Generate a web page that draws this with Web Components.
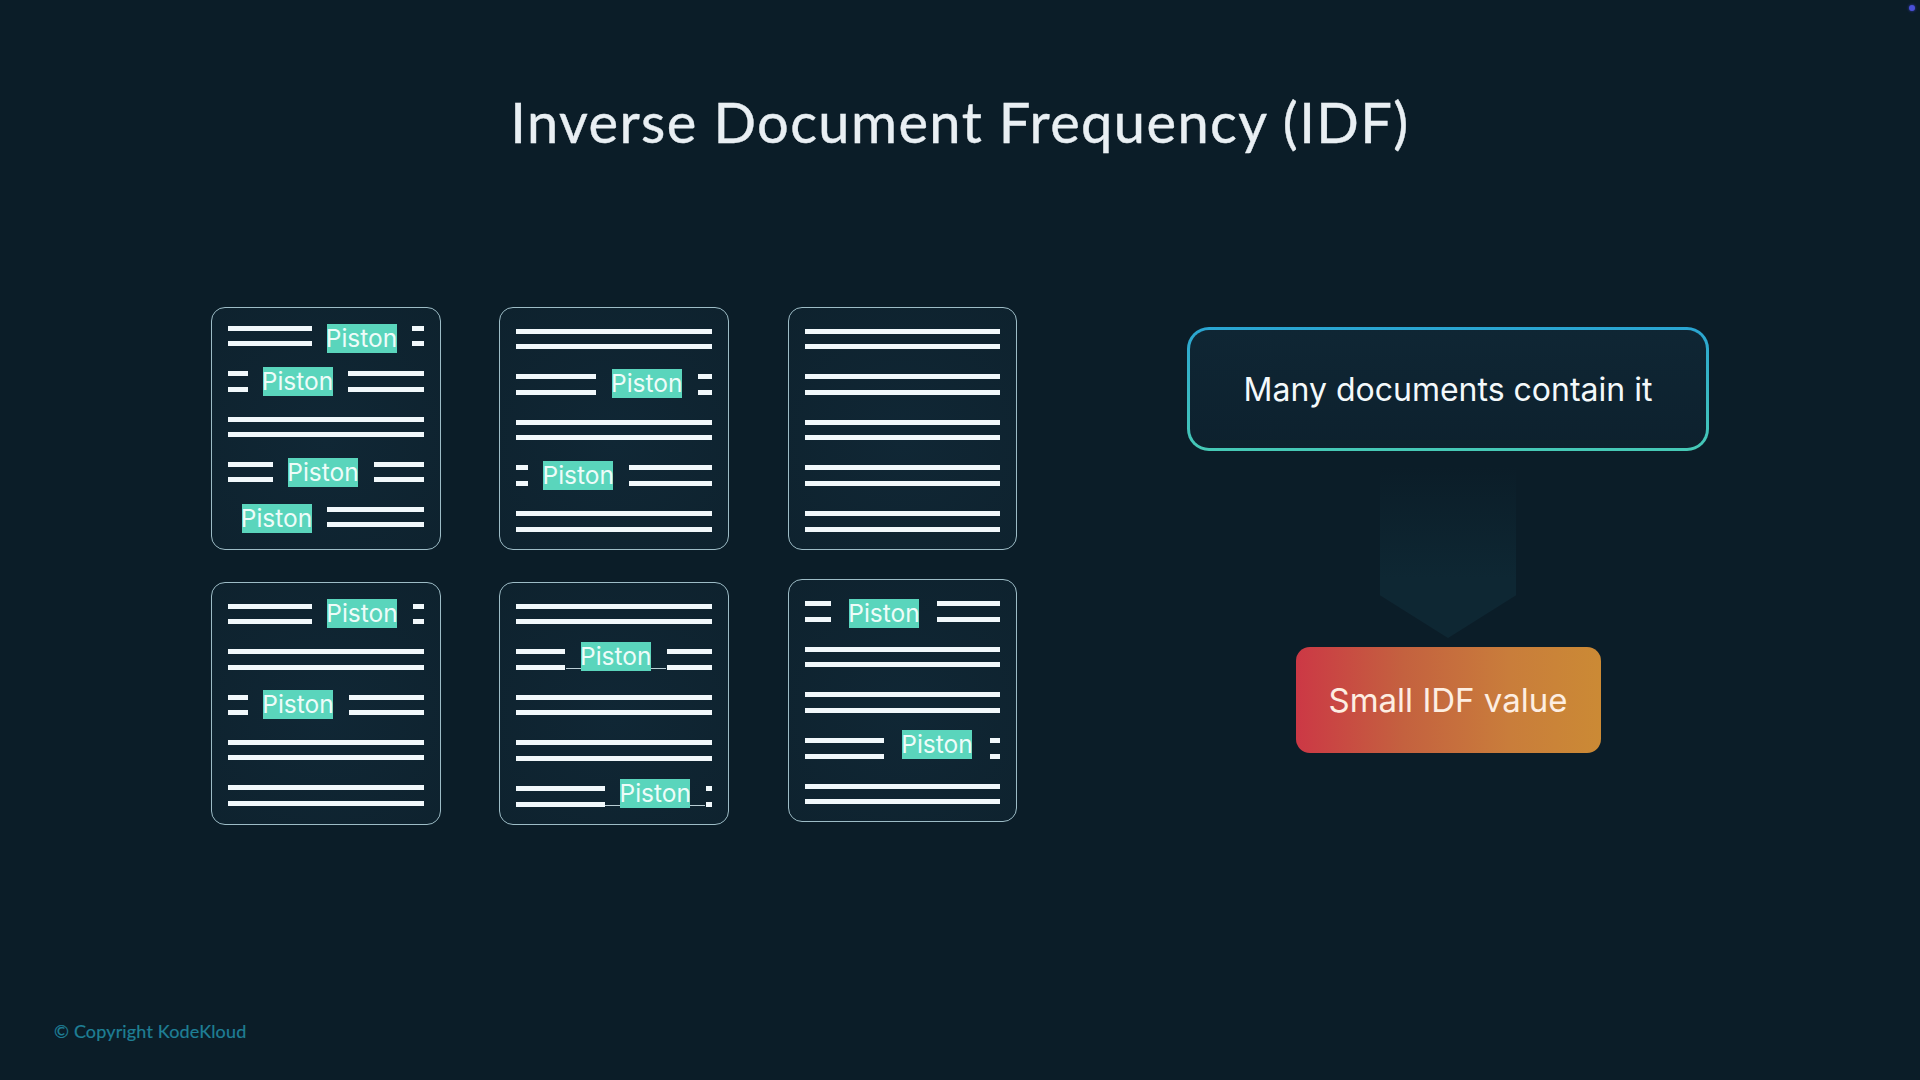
<!DOCTYPE html>
<html lang="en">
<head>
<meta charset="utf-8">
<title>Inverse Document Frequency (IDF)</title>
<style>
  html, body { margin: 0; background: #0b1d28; }
</style>
</head>
<body>
<idf-slide>
  <span slot="title">Inverse Document Frequency (IDF)</span>

  <doc-card slot="docs" style="--pad-top:17.5px">
    <text-row><bar-pair w="84"></bar-pair><term-chip dy="2.5"></term-chip><bar-pair w="12"></bar-pair></text-row>
    <text-row tall><bar-pair w="20"></bar-pair><term-chip dy="0.5"></term-chip><bar-pair w="76"></bar-pair></text-row>
    <text-row><bar-pair></bar-pair></text-row>
    <text-row><bar-pair w="45"></bar-pair><term-chip dy="0.5"></term-chip><bar-pair w="50"></bar-pair></text-row>
    <text-row><term-chip dy="2" style="margin-left:14px"></term-chip><bar-pair w="97"></bar-pair></text-row>
  </doc-card>

  <doc-card slot="docs">
    <text-row><bar-pair></bar-pair></text-row>
    <text-row tall><bar-pair w="80"></bar-pair><term-chip dy="-1"></term-chip><bar-pair w="14"></bar-pair></text-row>
    <text-row><bar-pair></bar-pair></text-row>
    <text-row tall><bar-pair w="12"></bar-pair><term-chip dy="0.5"></term-chip><bar-pair w="83"></bar-pair></text-row>
    <text-row tall><bar-pair></bar-pair></text-row>
  </doc-card>

  <doc-card slot="docs" class="last-col">
    <text-row><bar-pair></bar-pair></text-row>
    <text-row tall><bar-pair></bar-pair></text-row>
    <text-row><bar-pair></bar-pair></text-row>
    <text-row tall><bar-pair></bar-pair></text-row>
    <text-row tall><bar-pair></bar-pair></text-row>
  </doc-card>

  <doc-card slot="docs">
    <text-row><bar-pair w="84"></bar-pair><term-chip></term-chip><bar-pair w="11"></bar-pair></text-row>
    <text-row tall><bar-pair></bar-pair></text-row>
    <text-row><bar-pair w="20"></bar-pair><term-chip></term-chip><bar-pair w="75"></bar-pair></text-row>
    <text-row><bar-pair></bar-pair></text-row>
    <text-row tall><bar-pair></bar-pair></text-row>
  </doc-card>

  <doc-card slot="docs">
    <text-row><bar-pair></bar-pair></text-row>
    <text-row tall><bar-pair w="49"></bar-pair><term-chip dy="-3" underlined></term-chip><bar-pair w="45"></bar-pair></text-row>
    <text-row><bar-pair></bar-pair></text-row>
    <text-row tall><bar-pair></bar-pair></text-row>
    <text-row tall><bar-pair w="89"></bar-pair><term-chip dy="-3" underlined></term-chip><bar-pair w="6"></bar-pair></text-row>
  </doc-card>

  <doc-card slot="docs" class="last-col" style="margin-top:-3px">
    <text-row tall><bar-pair w="26"></bar-pair><term-chip dy="2"></term-chip><bar-pair w="63"></bar-pair></text-row>
    <text-row><bar-pair></bar-pair></text-row>
    <text-row tall><bar-pair></bar-pair></text-row>
    <text-row tall><bar-pair w="79"></bar-pair><term-chip dy="-3.5"></term-chip><bar-pair w="10"></bar-pair></text-row>
    <text-row><bar-pair></bar-pair></text-row>
  </doc-card>

  <idf-explain slot="side">
    <span slot="fact">Many documents contain it</span>
    <span slot="result">Small IDF value</span>
  </idf-explain>

  <span slot="footer">© Copyright KodeKloud</span>
</idf-slide>

<script>
class IdfSlide extends HTMLElement {
  constructor() {
    super();
    this.attachShadow({ mode: 'open' });
    this.shadowRoot.innerHTML = `
      <style>
        :host {
          display: flex;
          flex-direction: column;
          position: relative;
          width: 1920px;
          height: 1080px;
          overflow: hidden;
          background: #0b1d28;
        }
        h1 {
          margin: 87px 0 0;
          height: 70px;
          text-align: center;
          font: 400 56px/70px Lato, "Open Sans", sans-serif;
          letter-spacing: 1.4px;
          -webkit-text-stroke: 0.4px #e9eff3;
          color: #e9eff3;
        }
        main {
          display: flex;
          align-items: flex-start;
          margin: 150px 0 0 211px;
        }
        .docs {
          display: grid;
          grid-template-columns: repeat(3, 230px);
          grid-auto-rows: 243px;
          column-gap: 58.25px;
          row-gap: 32px;
        }
        .side { margin: 20px 0 0 169.5px; }
        footer {
          margin-top: auto;
          padding: 0 0 37px 54px;
          font: 400 18px/24px Lato, "Open Sans", sans-serif;
          letter-spacing: 0.15px;
          -webkit-text-stroke: 0.2px #1f7f96;
          color: #1f7f96;
        }
        .dot {
          position: absolute;
          top: 5px;
          left: 1909px;
          width: 6px;
          height: 6px;
          border-radius: 50%;
          background: #4a50d8;
          box-shadow: 0 0 3px #3a40b0;
        }
      </style>
      <h1><slot name="title"></slot></h1>
      <main>
        <div class="docs"><slot name="docs"></slot></div>
        <div class="side"><slot name="side"></slot></div>
      </main>
      <footer><slot name="footer"></slot></footer>
      <div class="dot"></div>
    `;
  }
}

class DocCard extends HTMLElement {
  constructor() {
    super();
    this.attachShadow({ mode: 'open' });
    this.shadowRoot.innerHTML = `
      <style>
        :host {
          display: flex;
          flex-direction: column;
          gap: 25px;
          box-sizing: border-box;
          height: 243px;
          padding: var(--pad-top, 20.5px) 16.5px 0 15.5px;
          border: 1.5px solid #9dbcc6;
          border-radius: 14px;
          background: radial-gradient(circle at 50% 55%, #102735, #0e222e);
        }
        /* the third column sits half a pixel over and is a pixel narrower */
        :host(.last-col) {
          width: 229px;
          margin-left: 0.5px;
          padding-left: 15.8px;
          padding-right: 15.8px;
        }
      </style>
      <slot></slot>
    `;
  }
}

class TextRow extends HTMLElement {
  constructor() {
    super();
    this.attachShadow({ mode: 'open' });
    this.shadowRoot.innerHTML = `
      <style>
        :host {
          display: flex;
          align-items: center;
          justify-content: space-between;
          height: 20px;
          --bar-gap: 10px;
        }
        :host([tall]) {
          height: 21px;
          --bar-gap: 11px;
        }
      </style>
      <slot></slot>
    `;
  }
}

class BarPair extends HTMLElement {
  constructor() {
    super();
    this.attachShadow({ mode: 'open' });
    this.shadowRoot.innerHTML = `
      <style>
        :host {
          display: flex;
          flex-direction: column;
          gap: var(--bar-gap, 10px);
          flex: 1 1 auto;
        }
        :host([w]) { flex: none; }
        i { display: block; height: 5px; background: #f1f8fb; }
      </style>
      <i></i><i></i>
    `;
  }

  connectedCallback() {
    if (this.hasAttribute('w')) this.style.width = this.getAttribute('w') + 'px';
  }
}

class TermChip extends HTMLElement {
  constructor() {
    super();
    this.attachShadow({ mode: 'open' });
    this.shadowRoot.innerHTML = `
      <style>
        :host {
          display: flex;
          align-items: center;
          justify-content: center;
          flex: none;
          position: relative;
          width: 70px;
          height: 29px;
          background: #5ad5bc;
          color: #eefcf9;
          font: 400 24.5px/29px Inter, Roboto, sans-serif;
        }
        /* hairlines left over from the covered bar, either side of the chip */
        :host([underlined])::before,
        :host([underlined])::after {
          content: '';
          position: absolute;
          bottom: 1.5px;
          width: 15px;
          height: 1px;
          background: #b9cdd4;
        }
        :host([underlined])::before { left: -15px; }
        :host([underlined])::after { right: -15px; }
      </style>
      <span>Piston</span>
    `;
  }

  connectedCallback() {
    const dy = parseFloat(this.getAttribute('dy') || '0');
    if (dy) this.style.marginTop = dy * 2 + 'px';
  }
}

class IdfExplain extends HTMLElement {
  constructor() {
    super();
    this.attachShadow({ mode: 'open' });
    this.shadowRoot.innerHTML = `
      <style>
        :host {
          display: flex;
          flex-direction: column;
          align-items: center;
          width: 522px;
          font-family: Inter, Roboto, sans-serif;
        }
        .fact {
          display: flex;
          align-items: center;
          justify-content: center;
          box-sizing: border-box;
          width: 522px;
          height: 124px;
          border: 3px solid transparent;
          border-radius: 22px;
          background:
            linear-gradient(#0f2634, #0d212e) padding-box,
            linear-gradient(#2aa5d2, #46c9b6) border-box;
          color: #f4f9fb;
          font-size: 32px;
        }
        .arrow {
          width: 136px;
          height: 171px;
          margin-top: 16px;
          background: linear-gradient(rgba(16, 42, 56, 0), #0e2733 65%);
          clip-path: polygon(0 0, 100% 0, 100% 75%, 50% 100%, 0 75%);
        }
        .result {
          display: flex;
          align-items: center;
          justify-content: center;
          width: 305px;
          height: 106px;
          margin-top: 9px;
          border-radius: 14px;
          background: linear-gradient(90deg, #cc3845, #c4613f 35%, #c97d3b 70%, #cb8a35);
          color: #fdeee2;
          font-size: 33px;
        }
      </style>
      <div class="fact"><slot name="fact"></slot></div>
      <div class="arrow"></div>
      <div class="result"><slot name="result"></slot></div>
    `;
  }
}

customElements.define('idf-slide', IdfSlide);
customElements.define('doc-card', DocCard);
customElements.define('text-row', TextRow);
customElements.define('bar-pair', BarPair);
customElements.define('term-chip', TermChip);
customElements.define('idf-explain', IdfExplain);
</script>
</body>
</html>
